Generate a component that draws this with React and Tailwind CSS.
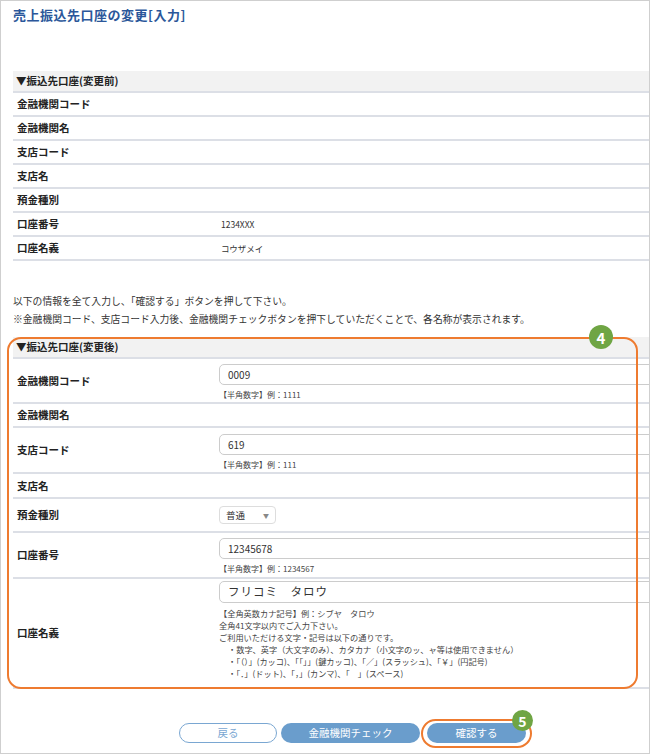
import React from 'react';

const font = { fontFamily: '"Noto Sans CJK JP", "Noto Sans", sans-serif' };

function Row({ label, value, h = 'h-[24px]', top, children }) {
  return (
    <div className={`flex border-b-2 border-[#dcdfe6] ${h}`}>
      <div className="w-[206px] shrink-0 pl-[4px] flex items-center text-[10.5px] font-bold text-[#222]">{label}</div>
      {children ? (
        <div className={top ? `self-start ${top}` : 'flex items-center'}>{children}</div>
      ) : (
        <div className="flex items-center text-[8.5px] text-[#333] pl-[2px]">{value}</div>
      )}
    </div>
  );
}

function Field({ value, hint }) {
  return (
    <div className="flex flex-col">
      <div className="w-[440px] h-[21px] border border-[#ccc] rounded-[5px] flex items-center pl-[8px] text-[10px] text-[#333]">
        {value}
      </div>
      <div className="text-[8px] text-[#444] mt-[6px] leading-none">{hint}</div>
    </div>
  );
}

function Badge({ n, className }) {
  return (
    <div className={`absolute rounded-full bg-[#6fa544] text-white font-bold flex items-center justify-center leading-none ${className}`}>
      {n}
    </div>
  );
}

export default function App() {
  const before = [
    ['金融機関コード', ''],
    ['金融機関名', ''],
    ['支店コード', ''],
    ['支店名', ''],
    ['預金種別', ''],
    ['口座番号', '1234XXX'],
    ['口座名義', 'コウザメイ'],
  ];

  return (
    <div style={font} className="w-[650px] h-[754px] border border-[#cfcfcf] bg-white overflow-hidden relative">
      <div className="pl-[12px]">
        <h1 className="pt-[4px] h-[24px] text-[13px] font-bold text-[#2b579a] tracking-[0.5px]">売上振込先口座の変更[入力]</h1>

        <div className="mt-[46px]">
          <div className="h-[22px] bg-[#f2f2f2] border-b-2 border-[#dcdfe6] flex items-center pl-[3px] text-[10.5px] font-bold text-[#222]">
            ▼振込先口座(変更前)
          </div>
          {before.map(([l, v]) => (
            <Row key={l} label={l} value={v} />
          ))}
        </div>

        <div className="mt-[31px] text-[9.8px] text-[#333] leading-[18px]">
          <p>以下の情報を全て入力し、「確認する」ボタンを押して下さい。</p>
          <p>※金融機関コード、支店コード入力後、金融機関チェックボタンを押下していただくことで、各名称が表示されます。</p>
        </div>

        <div className="relative mt-[9px]">
          <div className="h-[22px] bg-[#f2f2f2] border-b-2 border-[#dcdfe6] flex items-center pl-[3px] text-[10.5px] font-bold text-[#222]">
            ▼振込先口座(変更後)
          </div>
          <Row label="金融機関コード" h="h-[45px]" top="pt-[5px]">
            <Field value="0009" hint="【半角数字】例：1111" />
          </Row>
          <Row label="金融機関名" />
          <Row label="支店コード" h="h-[46px]" top="pt-[6px]">
            <Field value="619" hint="【半角数字】例：111" />
          </Row>
          <Row label="支店名" h="h-[25px]" />
          <Row label="預金種別" h="h-[34px]">
            <div className="w-[57px] h-[18px] border border-[#ddd] rounded-[4px] flex items-center justify-between px-[6px] text-[9.5px] text-[#333]">
              <span>普通</span>
              <span className="text-[6px] text-[#888]">▼</span>
            </div>
          </Row>
          <Row label="口座番号" h="h-[46px]" top="pt-[5px]">
            <Field value="12345678" hint="【半角数字】例：1234567" />
          </Row>
          <Row label="口座名義" h="h-[110px]" top="pt-[2px]">
            <div className="flex flex-col">
              <div className="w-[440px] h-[22px] border border-[#ccc] rounded-[5px] flex items-center pl-[8px] text-[11.5px] text-[#333] tracking-[1px]">
                フリコミ　タロウ
              </div>
              <div className="mt-[4px] text-[8.2px] text-[#444] leading-[12px]">
                <p>【全角英数カナ記号】例：シブヤ　タロウ</p>
                <p>全角41文字以内でご入力下さい。</p>
                <p>ご利用いただける文字・記号は以下の通りです。</p>
                <p className="pl-[9px]">・数字、英字（大文字のみ）、カタカナ（小文字のッ、ャ等は使用できません）</p>
                <p className="pl-[9px]">・「（）」(カッコ)、「「」」(鍵カッコ)、「／」(スラッシュ)、「￥」(円記号)</p>
                <p className="pl-[9px]">・「．」(ドット)、「，」(カンマ)、「　」(スペース)</p>
              </div>
            </div>
          </Row>

          <div className="absolute left-[-6px] top-0 w-[631px] h-[352px] border-[2.5px] border-[#ee7b30] rounded-[14px] pointer-events-none" />
          <Badge n="4" className="left-[576px] top-[-12px] w-[24px] h-[24px] text-[15px]" />
        </div>

        <div className="mt-[34px] flex items-center gap-[4px] pl-[166px]">
          <div className="w-[98px] h-[20px] rounded-full border border-[#7aa7d2] text-[#7aa7d2] text-[10.5px] flex items-center justify-center">
            戻る
          </div>
          <div className="w-[139px] h-[20px] rounded-full bg-[#6a9dcc] text-white text-[10.5px] flex items-center justify-center">
            金融機関チェック
          </div>
          <div className="relative ml-[3px]">
            <div className="absolute left-[-6px] top-[-4px] w-[111px] h-[29px] rounded-full border-[2.5px] border-[#ee7b30]" />
            <div className="w-[99px] h-[20px] rounded-full bg-[#6a9dcc] text-white text-[10.5px] flex items-center justify-center relative">
              確認する
            </div>
            <Badge n="5" className="left-[85px] top-[-13px] w-[21px] h-[21px] text-[14px]" />
          </div>
        </div>
      </div>
    </div>
  );
}
